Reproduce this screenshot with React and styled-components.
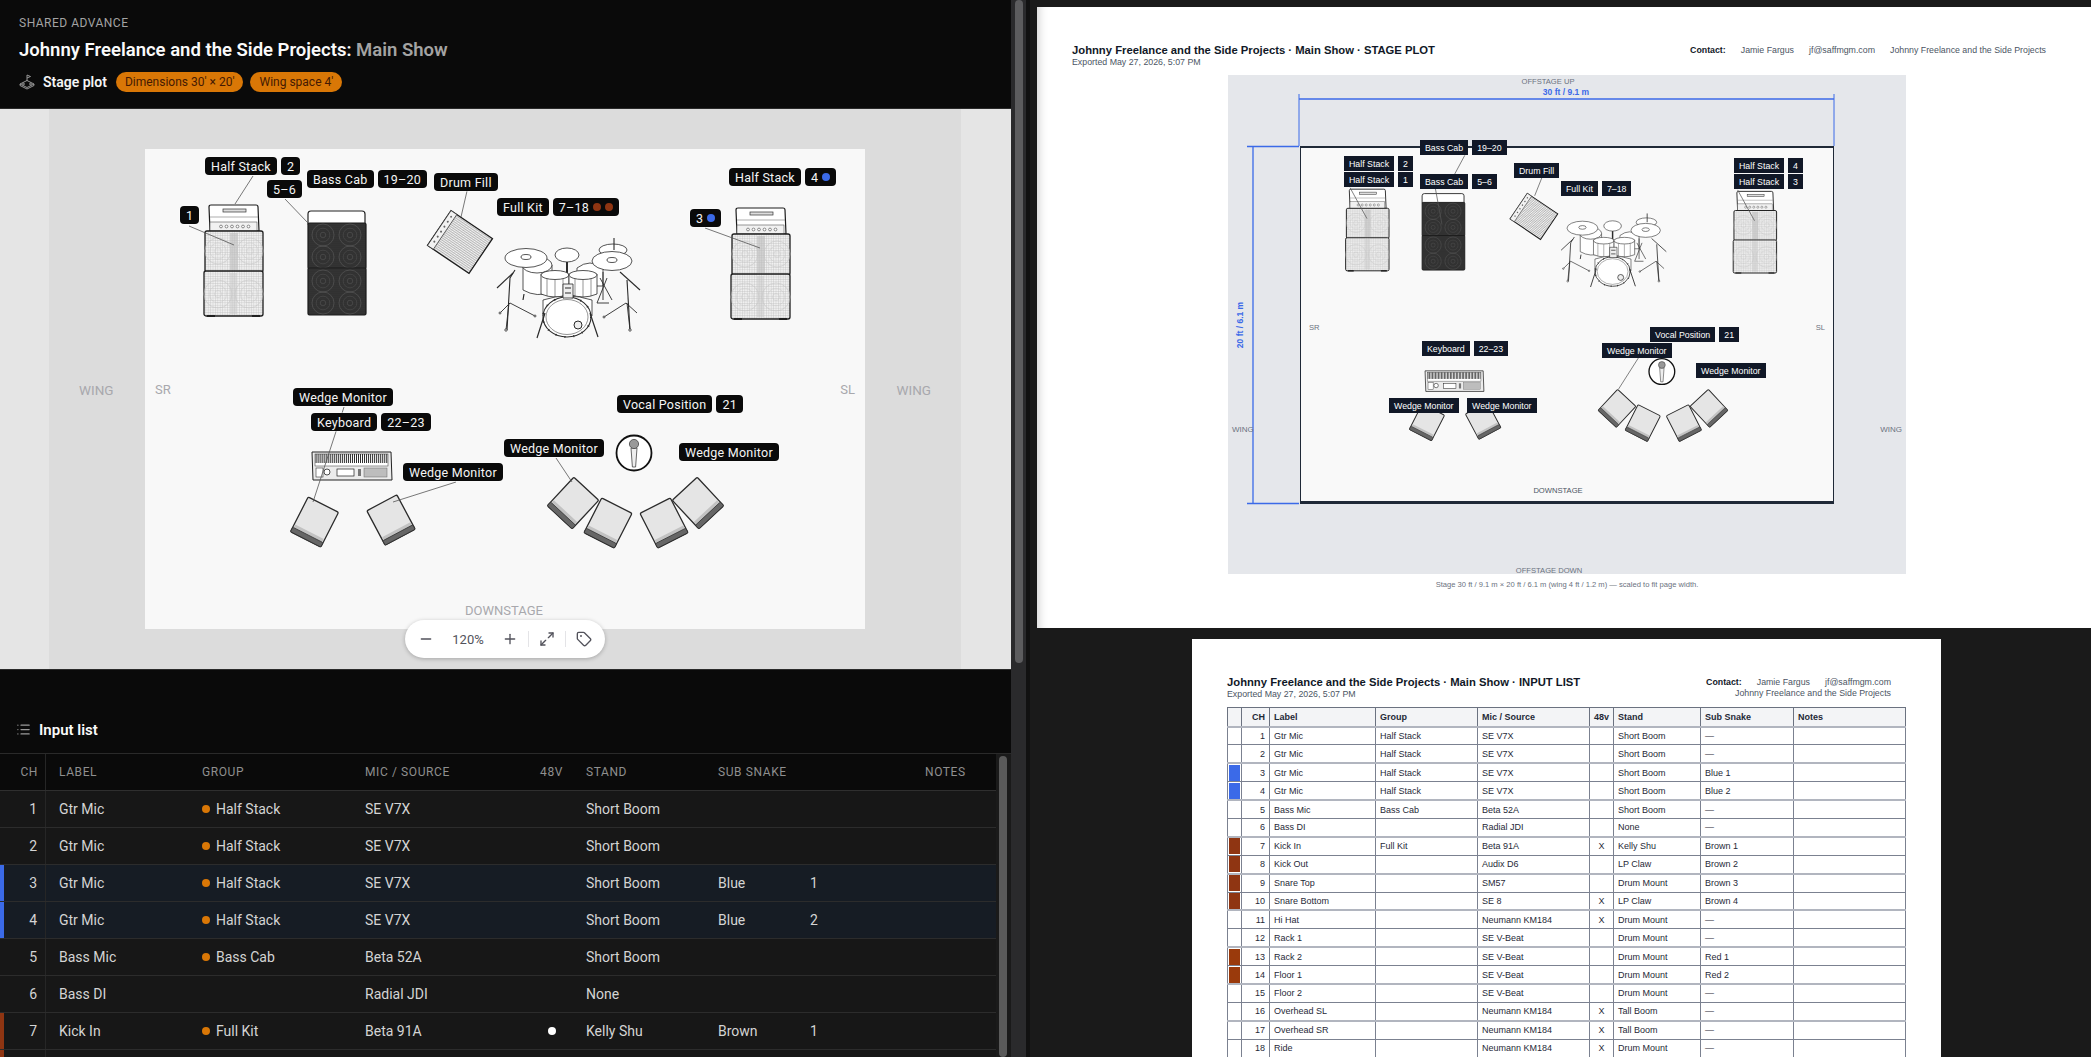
import React from 'react';
import styled, { createGlobalStyle } from 'styled-components';
import { List, Minus, Plus, Maximize2, Tag } from 'lucide-react';

const BLUE = '#3b6ae8';
const BROWN = '#8f3512';
const UI_FONT = 'Roboto, "Noto Sans", sans-serif';
const PDF_FONT = '"Liberation Sans", Arial, sans-serif';

const GlobalStyle = createGlobalStyle`
  html, body {
    margin: 0;
    padding: 0;
    height: 100%;
    background: #1a1a1a;
    overflow: hidden;
  }
  * { box-sizing: border-box; }
`;

/* ---------- instrument drawings ---------- */

function Speakers({ points, r, color }) {
  return points.map(([cx, cy]) => (
    <g key={`${cx}-${cy}`} fill="none" stroke={color}>
      <circle cx={cx} cy={cy} r={r} strokeWidth=".6" />
      <circle cx={cx} cy={cy} r={r * 0.62} strokeWidth=".4" />
      <circle cx={cx} cy={cy} r={r * 0.25} strokeWidth=".5" />
    </g>
  ));
}

function HalfStackArt({ x, y }) {
  return (
    <g transform={`translate(${x} ${y})`}>
      <path d="M7 27 L6 3 Q6 1 8 1 L53 1 Q55 1 55 3 L56 27 Z" fill="#fff" stroke="#1c1c1c" strokeWidth="1.2" />
      <rect x="20" y="5" width="23" height="3" fill="#ddd" stroke="#333" strokeWidth=".7" />
      <path d="M7 13 H55" stroke="#777" strokeWidth=".6" />
      <rect x="7" y="18" width="47" height="9" fill="#f1f1f1" stroke="#555" strokeWidth=".6" />
      {[18, 23.5, 29, 34.5, 40, 45.5].map(k => (
        <circle key={k} cx={k} cy="22.5" r="1.4" fill="#fff" stroke="#444" strokeWidth=".6" />
      ))}
      <rect x="2" y="27" width="58" height="41" rx="2" fill="url(#mesh)" stroke="#1c1c1c" strokeWidth="1.3" />
      <rect x="27" y="29" width="8" height="37" fill="#bdbdbd" opacity=".6" />
      <Speakers points={[[15, 47], [47, 47]]} r={13} color="#c6c6c6" />
      <rect x="1" y="67" width="59" height="45" rx="2" fill="url(#mesh)" stroke="#1c1c1c" strokeWidth="1.3" />
      <rect x="27" y="69" width="7" height="41" fill="#c8c8c8" opacity=".5" />
      <Speakers points={[[15, 90], [46, 90]]} r={14} color="#c6c6c6" />
      <path d="M4 112 H12 M49 112 H57" stroke="#111" strokeWidth="1.6" />
    </g>
  );
}

function BassCabArt({ x, y }) {
  return (
    <g transform={`translate(${x} ${y})`}>
      <path d="M1 14 V4 Q1 1 4 1 H55 Q58 1 58 4 V14 Z" fill="#fff" stroke="#222" strokeWidth="1.2" />
      <rect x="1" y="13" width="58" height="46" rx="1.5" fill="#363636" stroke="#1a1a1a" strokeWidth="1.2" />
      <rect x="1" y="13" width="58" height="46" fill="url(#darkMesh)" />
      <Speakers points={[[16, 25], [43, 25], [16, 47], [43, 47]]} r={11} color="#5c5c5c" />
      <rect x="1" y="58" width="58" height="47" rx="1.5" fill="#363636" stroke="#1a1a1a" strokeWidth="1.2" />
      <rect x="1" y="58" width="58" height="47" fill="url(#darkMesh)" />
      <Speakers points={[[16, 71], [43, 71], [16, 93], [43, 93]]} r={11} color="#5c5c5c" />
    </g>
  );
}

function DrumFillArt({ x, y }) {
  return (
    <g transform={`translate(${x} ${y}) rotate(34)`}>
      <rect x="-25" y="-21" width="50" height="42" fill="url(#lines)" stroke="#1c1c1c" strokeWidth="1.3" />
      <rect x="-25" y="-21" width="7" height="42" fill="#f2f2f2" stroke="#333" strokeWidth=".7" />
      {[-16, -10, -4, 2, 8, 14].map(k => (
        <circle key={k} cx="-21.5" cy={k} r="1" fill="#666" />
      ))}
    </g>
  );
}

function DrumKitArt({ x, y }) {
  return (
    <g transform={`translate(${x} ${y})`} stroke="#2a2a2a" strokeWidth=".8" fill="#fff">
      {/* left cymbal stand */}
      <path d="M18 32 L13 40 L10 92" fill="none" strokeWidth="1.1" />
      <path d="M0 50 L16 35" fill="none" strokeWidth="1.1" />
      <path d="M13 65 L3 75 M13 65 L38 78 M12 65 L9 92" fill="none" strokeWidth=".9" />
      <circle cx="9" cy="92" r="1.2" />
      <circle cx="3" cy="75" r="1" />
      <circle cx="38" cy="78" r="1" />
      {/* right cymbal stand */}
      <path d="M123 34 L143 52" fill="none" strokeWidth="1.1" />
      <path d="M130 42 L133 92" fill="none" strokeWidth="1.1" />
      <path d="M129 65 L107 79 M129 65 L140 75 M130 65 L133 92" fill="none" strokeWidth=".9" />
      <circle cx="107" cy="79" r="1" />
      <circle cx="133" cy="92" r="1.2" />
      {/* back cymbal */}
      <ellipse cx="116" cy="12" rx="14" ry="6" />
      <path d="M117 12 V0" fill="none" strokeWidth="1.1" />
      {/* far toms */}
      <path d="M26 27 V52 Q40 60 55 54 V27 Z" />
      <ellipse cx="40" cy="27" rx="15" ry="8" />
      <path d="M27 56 L26 62" fill="none" strokeWidth="1.2" />
      <path d="M80 30 Q93 20 106 30 V48 H80 Z" />
      {/* hi-hat stand */}
      <path d="M100 65 L110 40 M103 40 L115 62 M106 34 V62 M100 65 H112" fill="none" strokeWidth=".9" />
      {/* throne */}
      <ellipse cx="70" cy="17" rx="12" ry="7" />
      <path d="M70 24 V48" fill="none" strokeWidth="2" />
      {/* rack toms */}
      <path d="M44 36 V56 Q58 62 72 56 V36 Z" />
      <ellipse cx="58" cy="37" rx="14" ry="4.5" />
      <path d="M50 41 V58 M58 42 V60 M66 41 V58" fill="none" strokeWidth=".5" />
      <path d="M72 36 V56 Q86 62 100 56 V36 Z" />
      <ellipse cx="86" cy="37" rx="14" ry="4.5" />
      <path d="M78 41 V58 M86 42 V60 M94 41 V58" fill="none" strokeWidth=".5" />
      {/* kick */}
      <path d="M46 62 Q70 54 95 62 V78 H46 Z" />
      <ellipse cx="70" cy="79" rx="24" ry="20" strokeWidth="1.1" />
      <ellipse cx="70" cy="79" rx="21" ry="17.5" strokeWidth=".5" />
      <ellipse cx="70" cy="79" rx="24" ry="20" fill="none" strokeWidth="2" strokeDasharray="1 8" />
      <circle cx="81" cy="87" r="4" fill="#eee" strokeWidth="1" />
      <path d="M66 46 H76 V60 H66 Z" fill="#eee" />
      <path d="M68 50 H74 M68 55 H74" fill="none" strokeWidth="1" />
      <path d="M48 75 L40 100 M93 75 L101 99" fill="none" strokeWidth="1.2" />
      {/* front cymbals */}
      <ellipse cx="29" cy="20" rx="21" ry="9.5" />
      <ellipse cx="29" cy="19" rx="5" ry="2.5" />
      <ellipse cx="115" cy="23" rx="20" ry="9.5" />
      <ellipse cx="115" cy="22" rx="5" ry="2.5" />
    </g>
  );
}

function WedgeArt({ x, y, angle }) {
  return (
    <g transform={`translate(${x} ${y}) rotate(${angle})`}>
      <rect x="-17" y="-19.5" width="34" height="39" rx="1.5" fill="#e5e5e5" stroke="#2b2b2b" strokeWidth="1.3" />
      <rect x="-16" y="11" width="32" height="4" fill="#c2c2c2" />
      <rect x="-17" y="14.5" width="34" height="5" rx="1" fill="#666" stroke="#2b2b2b" strokeWidth=".7" />
    </g>
  );
}

function KeyboardArt({ x, y }) {
  const keys = Array.from({ length: 36 }, (_, i) => i);
  return (
    <g transform={`translate(${x} ${y})`}>
      <path d="M1 1 H80 L81 29 H2 Z" fill="#ececec" stroke="#222" strokeWidth="1" />
      <rect x="4" y="3" width="73" height="12" fill="#fff" stroke="#333" strokeWidth=".5" />
      {keys.map(i => (
        <rect key={i} x={4.6 + i * 2.02} y="3" width=".95" height="9" fill="#222" />
      ))}
      <rect x="5" y="17" width="7" height="9" fill="#fff" stroke="#333" strokeWidth=".6" />
      <circle cx="16" cy="21" r="3" fill="#fff" stroke="#222" strokeWidth=".8" />
      <rect x="26" y="18" width="17" height="7" fill="#fff" stroke="#222" strokeWidth=".7" />
      <rect x="47" y="18" width="3" height="7" fill="#777" />
      <rect x="53" y="17" width="23" height="9" fill="#bdbdbd" stroke="#666" strokeWidth=".5" />
    </g>
  );
}

function MicArt({ x, y }) {
  return (
    <g transform={`translate(${x} ${y})`}>
      <circle r="17.5" fill="#fff" stroke="#111" strokeWidth="1.8" />
      <path d="M-3 -5 L-1.6 14 H1.6 L3 -5 Z" fill="#eee" stroke="#444" strokeWidth=".8" />
      <circle cy="-9" r="4.6" fill="#999" stroke="#444" strokeWidth=".8" />
    </g>
  );
}

const WEDGES = [
  [169.5, 373, 27], [246, 371, -28], [428, 354, 43], [463, 374, 27], [519, 374, -27], [553, 354, -43],
];

function StageArt({ lines, leaderWidth }) {
  return (
    <ArtSvg viewBox="0 0 720 480">
      <defs>
        <pattern id="mesh" width="2.4" height="2.4" patternUnits="userSpaceOnUse">
          <rect width="2.4" height="2.4" fill="#f0f0f0" />
          <path d="M0 0 H2.4 M0 0 V2.4" stroke="#b5b5b5" strokeWidth=".6" />
        </pattern>
        <pattern id="darkMesh" width="2" height="2" patternUnits="userSpaceOnUse">
          <circle cx="1" cy="1" r=".5" fill="#1e1e1e" />
        </pattern>
        <pattern id="lines" width="3" height="2" patternUnits="userSpaceOnUse">
          <rect width="3" height="2" fill="#f6f6f6" />
          <path d="M0 .5 H3" stroke="#888" strokeWidth=".6" />
          <path d="M1.5 0 V2" stroke="#ccc" strokeWidth=".4" />
        </pattern>
      </defs>
      <HalfStackArt x={58} y={55} />
      <BassCabArt x={162} y={61} />
      <DrumFillArt x={315} y={93} />
      <DrumKitArt x={352} y={89} />
      <HalfStackArt x={585} y={58} />
      <KeyboardArt x={166} y={302} />
      <MicArt x={489} y={304} />
      {WEDGES.map(([x, y, a]) => <WedgeArt key={`${x}-${y}`} x={x} y={y} angle={a} />)}
      {lines.map(([a, b, c, d]) => (
        <line key={`${a}-${b}`} x1={a} y1={b} x2={c} y2={d} stroke="#555" strokeWidth={leaderWidth} />
      ))}
    </ArtSvg>
  );
}

/* ---------- left pane data ---------- */

const LIVE_LABELS = [
  { x: 60, y: 8, name: 'Half Stack', ch: '2' },
  { x: 35, y: 57, ch: '1' },
  { x: 162, y: 21, name: 'Bass Cab', ch: '19–20' },
  { x: 122, y: 31, ch: '5–6' },
  { x: 289, y: 24, name: 'Drum Fill' },
  { x: 352, y: 49, name: 'Full Kit', ch: '7–18', dots: [BROWN, BROWN] },
  { x: 584, y: 19, name: 'Half Stack', ch: '4', dots: [BLUE] },
  { x: 545, y: 60, ch: '3', dots: [BLUE] },
  { x: 148, y: 239, name: 'Wedge Monitor' },
  { x: 166, y: 264, name: 'Keyboard', ch: '22–23' },
  { x: 258, y: 314, name: 'Wedge Monitor' },
  { x: 359, y: 290, name: 'Wedge Monitor' },
  { x: 472, y: 246, name: 'Vocal Position', ch: '21' },
  { x: 534, y: 294, name: 'Wedge Monitor' },
];

const LIVE_LINES = [
  [108, 27, 90, 55], [44, 77, 89, 96], [140, 50, 163, 74], [322, 42, 316, 68], [560, 79, 615, 99],
  [199, 258, 168, 353], [311, 333, 248, 353], [411, 309, 427, 333],
];

const INPUT_ROWS = [
  { ch: 1, label: 'Gtr Mic', group: 'Half Stack', mic: 'SE V7X', stand: 'Short Boom' },
  { ch: 2, label: 'Gtr Mic', group: 'Half Stack', mic: 'SE V7X', stand: 'Short Boom' },
  { ch: 3, label: 'Gtr Mic', group: 'Half Stack', mic: 'SE V7X', stand: 'Short Boom', snake: 'Blue', num: 1, color: BLUE },
  { ch: 4, label: 'Gtr Mic', group: 'Half Stack', mic: 'SE V7X', stand: 'Short Boom', snake: 'Blue', num: 2, color: BLUE },
  { ch: 5, label: 'Bass Mic', group: 'Bass Cab', mic: 'Beta 52A', stand: 'Short Boom' },
  { ch: 6, label: 'Bass DI', mic: 'Radial JDI', stand: 'None' },
  { ch: 7, label: 'Kick In', group: 'Full Kit', mic: 'Beta 91A', phantom: true, stand: 'Kelly Shu', snake: 'Brown', num: 1, color: BROWN },
  { color: BROWN },
];

/* ---------- right pane data ---------- */

const PDF_LABELS = [
  { x: 43, y: 8, name: 'Half Stack', ch: '2' },
  { x: 43, y: 24, name: 'Half Stack', ch: '1' },
  { x: 119, y: -8, name: 'Bass Cab', ch: '19–20' },
  { x: 119, y: 26, name: 'Bass Cab', ch: '5–6' },
  { x: 213, y: 15, name: 'Drum Fill' },
  { x: 260, y: 33, name: 'Full Kit', ch: '7–18' },
  { x: 433, y: 10, name: 'Half Stack', ch: '4' },
  { x: 433, y: 26, name: 'Half Stack', ch: '3' },
  { x: 349, y: 179, name: 'Vocal Position', ch: '21' },
  { x: 121, y: 193, name: 'Keyboard', ch: '22–23' },
  { x: 301, y: 195, name: 'Wedge Monitor' },
  { x: 395, y: 215, name: 'Wedge Monitor' },
  { x: 88, y: 250, name: 'Wedge Monitor' },
  { x: 166, y: 250, name: 'Wedge Monitor' },
];

const PDF_LINES = [
  [65, 54, 88, 96], [221, 10, 207, 36], [181, 55, 190, 104], [326, 40, 316, 65], [592, 57, 615, 99], [458, 284, 430, 328],
];

const r = (ch, label, group, mic, v48, stand, snake, swatch) => ({ ch, label, group, mic, v48, stand, snake, swatch });
const PDF_ROWS = [
  r(1, 'Gtr Mic', 'Half Stack', 'SE V7X', '', 'Short Boom', '—'),
  r(2, 'Gtr Mic', 'Half Stack', 'SE V7X', '', 'Short Boom', '—'),
  r(3, 'Gtr Mic', 'Half Stack', 'SE V7X', '', 'Short Boom', 'Blue 1', BLUE),
  r(4, 'Gtr Mic', 'Half Stack', 'SE V7X', '', 'Short Boom', 'Blue 2', BLUE),
  r(5, 'Bass Mic', 'Bass Cab', 'Beta 52A', '', 'Short Boom', '—'),
  r(6, 'Bass DI', '', 'Radial JDI', '', 'None', '—'),
  r(7, 'Kick In', 'Full Kit', 'Beta 91A', 'X', 'Kelly Shu', 'Brown 1', BROWN),
  r(8, 'Kick Out', '', 'Audix D6', '', 'LP Claw', 'Brown 2', BROWN),
  r(9, 'Snare Top', '', 'SM57', '', 'Drum Mount', 'Brown 3', BROWN),
  r(10, 'Snare Bottom', '', 'SE 8', 'X', 'LP Claw', 'Brown 4', BROWN),
  r(11, 'Hi Hat', '', 'Neumann KM184', 'X', 'Drum Mount', '—'),
  r(12, 'Rack 1', '', 'SE V-Beat', '', 'Drum Mount', '—'),
  r(13, 'Rack 2', '', 'SE V-Beat', '', 'Drum Mount', 'Red 1', '#9a3a0c'),
  r(14, 'Floor 1', '', 'SE V-Beat', '', 'Drum Mount', 'Red 2', '#9a3a0c'),
  r(15, 'Floor 2', '', 'SE V-Beat', '', 'Drum Mount', '—'),
  r(16, 'Overhead SL', '', 'Neumann KM184', 'X', 'Tall Boom', '—'),
  r(17, 'Overhead SR', '', 'Neumann KM184', 'X', 'Tall Boom', '—'),
  r(18, 'Ride', '', 'Neumann KM184', 'X', 'Drum Mount', '—'),
];

const PDF_COLS = [14, 28, 106, 102, 112, 24, 87, 93, 112];

/* ---------- app ---------- */

function StageIcon() {
  return (
    <svg width="16" height="16" viewBox="0 0 16 16" fill="none" stroke="#a3a3a3" strokeWidth=".9">
      <path d="M8 7 V1 L11.5 2.5 L8 4" />
      <path d="M8 6.5 L15 10 L8 13.5 L1 10 Z" />
      <path d="M1 10 V11.5 L8 15 L15 11.5 V10" />
      <circle cx="4.5" cy="10" r=".9" />
      <circle cx="11.5" cy="10" r=".9" />
    </svg>
  );
}

function App() {
  return (
    <Screen>
      <GlobalStyle />
      <LeftPane>
        <Header>
          <Eyebrow>SHARED ADVANCE</Eyebrow>
          <Title>Johnny Freelance and the Side Projects: <Muted>Main Show</Muted></Title>
          <HeaderRow>
            <StageIcon />
            <SectionName>Stage plot</SectionName>
            <Pill>Dimensions 30′ × 20′</Pill>
            <Pill>Wing space 4′</Pill>
          </HeaderRow>
        </Header>

        <StagePane>
          <WingFloor>
            <WingText $side="left">WING</WingText>
            <WingText $side="right">WING</WingText>
            <StageCanvas>
              <StageArt lines={LIVE_LINES} leaderWidth={0.8} />
              <EdgeText $side="left">SR</EdgeText>
              <EdgeText $side="right">SL</EdgeText>
              <Downstage>DOWNSTAGE</Downstage>
              {LIVE_LABELS.map(l => (
                <LabelGroup key={`${l.x}-${l.y}`} $x={l.x} $y={l.y}>
                  {l.name && <Chip>{l.name}</Chip>}
                  {l.ch && (
                    <Chip>
                      {l.ch}
                      {l.dots && l.dots.map((c, i) => <ChipDot key={i} $color={c} />)}
                    </Chip>
                  )}
                </LabelGroup>
              ))}
            </StageCanvas>
          </WingFloor>
          <ZoomBar>
            <ZoomButton><Minus size={16} /></ZoomButton>
            <ZoomValue>120%</ZoomValue>
            <ZoomButton><Plus size={16} /></ZoomButton>
            <ZoomDivider />
            <ZoomButton><Maximize2 size={16} /></ZoomButton>
            <ZoomDivider />
            <ZoomButton><Tag size={16} /></ZoomButton>
          </ZoomBar>
        </StagePane>

        <InputHeading>
          <List size={15} color="#9a9a9a" />
          <span>Input list</span>
        </InputHeading>

        <InputTable>
          <InputRows>
            <HeadRow>
              <HeadCh>CH</HeadCh>
              <HeadCell>LABEL</HeadCell>
              <HeadCell>GROUP</HeadCell>
              <HeadCell>MIC / SOURCE</HeadCell>
              <HeadCell $align="center">48V</HeadCell>
              <HeadCell>STAND</HeadCell>
              <HeadCell>SUB SNAKE</HeadCell>
              <HeadCell />
              <HeadCell>NOTES</HeadCell>
            </HeadRow>
            {INPUT_ROWS.map((row, i) => (
              <BodyRow key={i} $color={row.color} $tint={row.color === BLUE}>
                <ChCell>{row.ch}</ChCell>
                <Cell>{row.label}</Cell>
                <Cell>{row.group && <><GroupDot />{row.group}</>}</Cell>
                <Cell>{row.mic}</Cell>
                <Cell $align="center">{row.phantom && <PhantomDot />}</Cell>
                <Cell>{row.stand}</Cell>
                <Cell>{row.snake}</Cell>
                <Cell>{row.num}</Cell>
                <Cell />
              </BodyRow>
            ))}
          </InputRows>
          <TableScroll><TableThumb /></TableScroll>
        </InputTable>
      </LeftPane>

      <PaneScroll><PaneThumb /></PaneScroll>
      <PaneDivider />

      <RightPane>
        <Pages>
          <PlotPage>
            <PageHead>
              <div>
                <PageTitle>Johnny Freelance and the Side Projects · Main Show · STAGE PLOT</PageTitle>
                <Exported>Exported May 27, 2026, 5:07 PM</Exported>
              </div>
              <ContactRow>
                <b>Contact:</b>
                <span>Jamie Fargus</span>
                <span>jf@saffmgm.com</span>
                <span>Johnny Freelance and the Side Projects</span>
              </ContactRow>
            </PageHead>
            <Plot>
              <PlotText $x={320} $y={6}>OFFSTAGE UP</PlotText>
              <DimText $x={338} $y={17}>30 ft / 9.1 m</DimText>
              <DimLines viewBox="0 0 678 499">
                <g stroke={BLUE} fill="none">
                  <path d="M71 19 V71 M606 19 V71" strokeWidth="1" />
                  <path d="M71 24 H606" strokeWidth="1.5" />
                  <path d="M19 71.5 H71 M19 428.5 H71 M25 71 V428" strokeWidth="1.3" />
                </g>
              </DimLines>
              <DimTextVertical>20 ft / 6.1 m</DimTextVertical>
              <PlotWing $side="left">WING</PlotWing>
              <PlotWing $side="right">WING</PlotWing>
              <PlotCanvas>
                <StageArt lines={PDF_LINES} leaderWidth={1} />
                <PlotEdge $side="left">SR</PlotEdge>
                <PlotEdge $side="right">SL</PlotEdge>
                <PlotDownstage>DOWNSTAGE</PlotDownstage>
                {PDF_LABELS.map(l => (
                  <PdfLabelGroup key={`${l.x}-${l.y}`} $x={l.x} $y={l.y}>
                    <PdfChip>{l.name}</PdfChip>
                    {l.ch && <PdfChip>{l.ch}</PdfChip>}
                  </PdfLabelGroup>
                ))}
              </PlotCanvas>
              <PlotText $x={321} $y={495}>OFFSTAGE DOWN</PlotText>
            </Plot>
            <Caption>Stage 30 ft / 9.1 m × 20 ft / 6.1 m (wing 4 ft / 1.2 m) — scaled to fit page width.</Caption>
          </PlotPage>

          <ListPage>
            <ListHead>
              <div>
                <PageTitle>Johnny Freelance and the Side Projects · Main Show · INPUT LIST</PageTitle>
                <Exported>Exported May 27, 2026, 5:07 PM</Exported>
              </div>
              <ContactStack>
                <ContactRow>
                  <b>Contact:</b>
                  <span>Jamie Fargus</span>
                  <span>jf@saffmgm.com</span>
                </ContactRow>
                <span>Johnny Freelance and the Side Projects</span>
              </ContactStack>
            </ListHead>
            <PdfTable>
              <colgroup>
                {PDF_COLS.map((w, i) => <col key={i} style={{ width: w }} />)}
              </colgroup>
              <thead>
                <tr>
                  <PdfTh />
                  <PdfTh $right>CH</PdfTh>
                  <PdfTh>Label</PdfTh>
                  <PdfTh>Group</PdfTh>
                  <PdfTh>Mic / Source</PdfTh>
                  <PdfTh $center>48v</PdfTh>
                  <PdfTh>Stand</PdfTh>
                  <PdfTh>Sub Snake</PdfTh>
                  <PdfTh>Notes</PdfTh>
                </tr>
              </thead>
              <tbody>
                {PDF_ROWS.map(row => (
                  <PdfRow key={row.ch}>
                    <SwatchTd>{row.swatch && <Swatch $color={row.swatch} />}</SwatchTd>
                    <PdfTd $right>{row.ch}</PdfTd>
                    <PdfTd>{row.label}</PdfTd>
                    <PdfTd>{row.group}</PdfTd>
                    <PdfTd>{row.mic}</PdfTd>
                    <PdfTd $center>{row.v48}</PdfTd>
                    <PdfTd>{row.stand}</PdfTd>
                    <PdfTd>{row.snake}</PdfTd>
                    <PdfTd />
                  </PdfRow>
                ))}
              </tbody>
            </PdfTable>
          </ListPage>
        </Pages>
      </RightPane>
    </Screen>
  );
}

const Screen = styled.div`
  display: flex;
  width: 2091px;
  height: 1057px;
  overflow: hidden;
  font-family: ${UI_FONT};
`;

const LeftPane = styled.div`
  width: 1011px;
  flex: none;
  display: flex;
  flex-direction: column;
  background: #0a0a0a;
`;

const Header = styled.div`
  height: 108px;
  flex: none;
  padding: 16px 19px 0;
  background: #0a0a0a;
`;

const Eyebrow = styled.div`
  font-size: 12px;
  line-height: 14px;
  letter-spacing: 0.5px;
  color: #a3a3a3;
`;

const Title = styled.div`
  margin-top: 7px;
  font-size: 18.5px;
  line-height: 26px;
  font-weight: 600;
  color: #fafafa;
  white-space: nowrap;
`;

const Muted = styled.span`
  color: #a3a3a3;
`;

const HeaderRow = styled.div`
  display: flex;
  align-items: center;
  margin-top: 9px;
  height: 20px;
`;

const SectionName = styled.span`
  margin: 0 9px 0 8px;
  font-size: 14px;
  font-weight: 600;
  color: #f5f5f5;
`;

const Pill = styled.span`
  display: inline-flex;
  align-items: center;
  height: 20px;
  padding: 0 9px;
  margin-right: 7px;
  border-radius: 10px;
  background: #d97706;
  color: #451a03;
  font-size: 12px;
  white-space: nowrap;
`;

const StagePane = styled.div`
  position: relative;
  height: 561px;
  flex: none;
  background: #e5e5e5;
  border-top: 1px solid #2a2a2a;
`;

const WingFloor = styled.div`
  position: relative;
  width: 912px;
  height: 100%;
  margin-left: 49px;
  padding: 40px 96px 0;
  background: #dcdcdc;
`;

const WingText = styled.span`
  position: absolute;
  top: 273px;
  ${p => p.$side}: 30px;
  font-size: 13.5px;
  line-height: 16px;
  color: #a8a8ad;
`;

const StageCanvas = styled.div`
  position: relative;
  width: 720px;
  height: 480px;
  background: #f8f8f8;
`;

const ArtSvg = styled.svg`
  position: absolute;
  inset: 0;
  width: 100%;
  height: 100%;
  overflow: visible;
`;

const EdgeText = styled.span`
  position: absolute;
  top: 233px;
  ${p => p.$side}: 10px;
  font-size: 13px;
  line-height: 16px;
  color: #a8a8ad;
`;

const Downstage = styled.span`
  position: absolute;
  left: 359px;
  top: 454px;
  transform: translateX(-50%);
  font-size: 13px;
  line-height: 16px;
  color: #a8a8ad;
`;

const LabelGroup = styled.div`
  position: absolute;
  left: ${p => p.$x}px;
  top: ${p => p.$y}px;
  display: flex;
  gap: 4px;
`;

const Chip = styled.span`
  display: inline-flex;
  align-items: center;
  gap: 3px;
  height: 18px;
  padding: 0 6px;
  border-radius: 4px;
  background: #0a0a0a;
  color: #f5f5f5;
  font-size: 12.5px;
  letter-spacing: 0.25px;
  white-space: nowrap;
  box-shadow: 0 0 0 1px rgba(255, 255, 255, 0.35);
`;

const ChipDot = styled.i`
  width: 8px;
  height: 8px;
  margin-left: 1px;
  border-radius: 50%;
  background: ${p => p.$color};
`;

const ZoomBar = styled.div`
  position: absolute;
  left: 405px;
  top: 511px;
  width: 200px;
  height: 38px;
  display: flex;
  align-items: center;
  padding: 0 12px;
  background: #fff;
  border-radius: 19px;
  box-shadow: 0 1px 4px rgba(0, 0, 0, 0.25);
`;

const ZoomButton = styled.span`
  display: inline-flex;
  width: 18px;
  justify-content: center;
  color: #52525b;
`;

const ZoomValue = styled.span`
  width: 66px;
  text-align: center;
  font-size: 13px;
  color: #52525b;
`;

const ZoomDivider = styled.i`
  width: 1px;
  height: 16px;
  margin: 0 9px;
  background: #e4e4e7;
`;

const InputHeading = styled.div`
  height: 85px;
  flex: none;
  display: flex;
  align-items: center;
  gap: 8px;
  padding: 36px 0 0 16px;
  background: #0a0a0a;
  border-top: 1px solid #2a2a2a;
  border-bottom: 1px solid #2a2a2a;
  color: #fafafa;
  font-size: 15px;
  font-weight: 600;
`;

const InputTable = styled.div`
  flex: 1;
  min-height: 0;
  display: flex;
  overflow: hidden;
`;

const InputRows = styled.div`
  width: 996px;
  flex: none;
`;

const gridColumns = '46px 143px 163px 178px 43px 132px 92px 115px 84px';

const HeadRow = styled.div`
  display: grid;
  grid-template-columns: ${gridColumns};
  height: 37px;
  background: #0a0a0a;
  border-bottom: 1px solid #2f2f2f;
`;

const HeadCell = styled.div`
  display: flex;
  align-items: center;
  justify-content: ${p => (p.$align === 'center' ? 'center' : 'flex-start')};
  padding-left: ${p => (p.$align === 'center' ? 0 : 13)}px;
  font-size: 12px;
  letter-spacing: 0.6px;
  color: #8f8f8f;
  white-space: nowrap;
`;

const HeadCh = styled(HeadCell)`
  justify-content: flex-end;
  padding: 0 7px 0 0;
  border-right: 1px solid #262626;
`;

const BodyRow = styled.div`
  position: relative;
  display: grid;
  grid-template-columns: ${gridColumns};
  height: 37px;
  background: ${p => (p.$tint ? '#161c24' : '#171717')};
  border-bottom: 1px solid #2c2c2c;
  box-shadow: ${p => (p.$color ? `inset 4px 0 0 ${p.$color}` : 'none')};
`;

const Cell = styled.div`
  display: flex;
  align-items: center;
  justify-content: ${p => (p.$align === 'center' ? 'center' : 'flex-start')};
  padding-left: ${p => (p.$align === 'center' ? 0 : 13)}px;
  font-size: 14px;
  color: #d4d4d4;
  white-space: nowrap;
`;

const ChCell = styled(Cell)`
  justify-content: flex-end;
  padding: 0 8px 0 0;
  border-right: 1px solid #262626;
`;

const GroupDot = styled.i`
  width: 8px;
  height: 8px;
  margin-right: 6px;
  border-radius: 50%;
  background: #d97706;
`;

const PhantomDot = styled.i`
  width: 8px;
  height: 8px;
  border-radius: 50%;
  background: #fff;
`;

const TableScroll = styled.div`
  flex: 1;
  padding: 2px 3px 0;
  background: #1a1a1a;
`;

const TableThumb = styled.div`
  width: 8px;
  height: 100%;
  border-radius: 4px;
  background: #5a5a5a;
`;

const PaneScroll = styled.div`
  width: 15px;
  flex: none;
  padding: 0 3px 394px 4px;
  background: #2a2a2c;
`;

const PaneThumb = styled.div`
  width: 8px;
  height: 100%;
  border-radius: 4px;
  background: #5c5c5e;
`;

const PaneDivider = styled.div`
  width: 4px;
  flex: none;
  background: #111;
`;

const RightPane = styled.div`
  flex: 1;
  min-width: 0;
  padding: 7px 0 0 7px;
  background: #1a1a1a;
  overflow: hidden;
`;

const Pages = styled.div`
  width: 1059px;
  display: flex;
  flex-direction: column;
  align-items: center;
  gap: 11px;
`;

const PlotPage = styled.div`
  width: 1059px;
  height: 621px;
  flex: none;
  padding: 37px 50px 0 35px;
  background: #fff;
  box-shadow: inset 10px 0 10px -8px rgba(0, 0, 0, 0.18);
  font-family: ${PDF_FONT};
`;

const PageHead = styled.div`
  display: flex;
  justify-content: space-between;
  height: 31px;
`;

const PageTitle = styled.div`
  font-size: 11.25px;
  line-height: 13px;
  font-weight: 700;
  color: #111827;
  white-space: nowrap;
`;

const Exported = styled.div`
  font-size: 8.8px;
  line-height: 11px;
  color: #4b5563;
`;

const ContactRow = styled.div`
  display: flex;
  gap: 15px;
  font-size: 8.8px;
  line-height: 12px;
  color: #4b5563;
  white-space: nowrap;

  b {
    color: #111827;
  }
`;

const Plot = styled.div`
  position: relative;
  width: 678px;
  height: 499px;
  margin-left: 156px;
  background: #e5e7eb;
`;

const PlotText = styled.span`
  position: absolute;
  left: ${p => p.$x}px;
  top: ${p => p.$y}px;
  transform: translate(-50%, -50%);
  font-size: 7.6px;
  color: #6b7280;
  white-space: nowrap;
`;

const DimText = styled(PlotText)`
  color: ${BLUE};
  font-weight: 700;
  font-size: 8.5px;
`;

const DimTextVertical = styled.span`
  position: absolute;
  left: 12px;
  top: 250px;
  transform: translate(-50%, -50%) rotate(-90deg);
  color: ${BLUE};
  font-weight: 700;
  font-size: 8.5px;
  white-space: nowrap;
`;

const DimLines = styled.svg`
  position: absolute;
  inset: 0;
  width: 100%;
  height: 100%;
`;

const PlotWing = styled.span`
  position: absolute;
  top: 350px;
  ${p => p.$side}: 4px;
  font-size: 8px;
  color: #6b7280;
`;

const PlotCanvas = styled.div`
  position: absolute;
  left: 72px;
  top: 71px;
  width: 534px;
  height: 358px;
  background: #f9f9f9;
  border: 1px solid #1f2937;
  border-top-width: 2px;
  border-bottom-width: 3px;
`;

const PlotEdge = styled.span`
  position: absolute;
  top: 175px;
  ${p => p.$side}: 8px;
  font-size: 7.6px;
  color: #6b7280;
`;

const PlotDownstage = styled.span`
  position: absolute;
  left: 257px;
  top: 338px;
  transform: translateX(-50%);
  font-size: 7.6px;
  color: #4b5563;
`;

const PdfLabelGroup = styled.div`
  position: absolute;
  left: ${p => p.$x}px;
  top: ${p => p.$y}px;
  display: flex;
  gap: 4px;
`;

const PdfChip = styled.span`
  display: inline-flex;
  align-items: center;
  height: 15px;
  padding: 0 5px;
  background: #111827;
  color: #fff;
  font-size: 8.8px;
  white-space: nowrap;
`;

const Caption = styled.div`
  margin-top: 6px;
  width: 678px;
  margin-left: 156px;
  text-align: center;
  font-size: 7.6px;
  line-height: 10px;
  color: #6b7280;
`;

const ListPage = styled.div`
  width: 749px;
  flex: none;
  padding: 37px 36px 0 35px;
  background: #fff;
  font-family: ${PDF_FONT};
`;

const ListHead = styled.div`
  display: flex;
  justify-content: space-between;
  height: 31px;
  padding-right: 14px;
`;

const ContactStack = styled.div`
  display: flex;
  flex-direction: column;
  align-items: flex-end;
  font-size: 8.8px;
  line-height: 11px;
  color: #4b5563;
`;

const PdfTable = styled.table`
  width: 678px;
  table-layout: fixed;
  border-collapse: collapse;
  border: 1px solid #6b7280;
  border-top: 1.5px solid #374151;
  font-size: 9px;
  color: #1f2937;
`;

const PdfTh = styled.th`
  height: 19px;
  padding: 0 4px;
  background: #f3f4f6;
  border: 1px solid #6b7280;
  border-bottom: 2px solid #b1b5bf;
  font-weight: 700;
  text-align: ${p => (p.$right ? 'right' : p.$center ? 'center' : 'left')};
  white-space: nowrap;
`;

const PdfTd = styled.td`
  height: 18.4px;
  padding: 0 4px;
  border: 1px solid #7b8190;
  text-align: ${p => (p.$right ? 'right' : p.$center ? 'center' : 'left')};
  white-space: nowrap;
`;

const SwatchTd = styled.td`
  height: 18.4px;
  padding: 0 1px;
  border: 1px solid #7b8190;
`;

const PdfRow = styled.tr`
  &:nth-child(even) td {
    border-bottom: 2px solid #b1b5bf;
  }
`;

const Swatch = styled.div`
  height: 16px;
  background: ${p => p.$color};
`;

export default App;
